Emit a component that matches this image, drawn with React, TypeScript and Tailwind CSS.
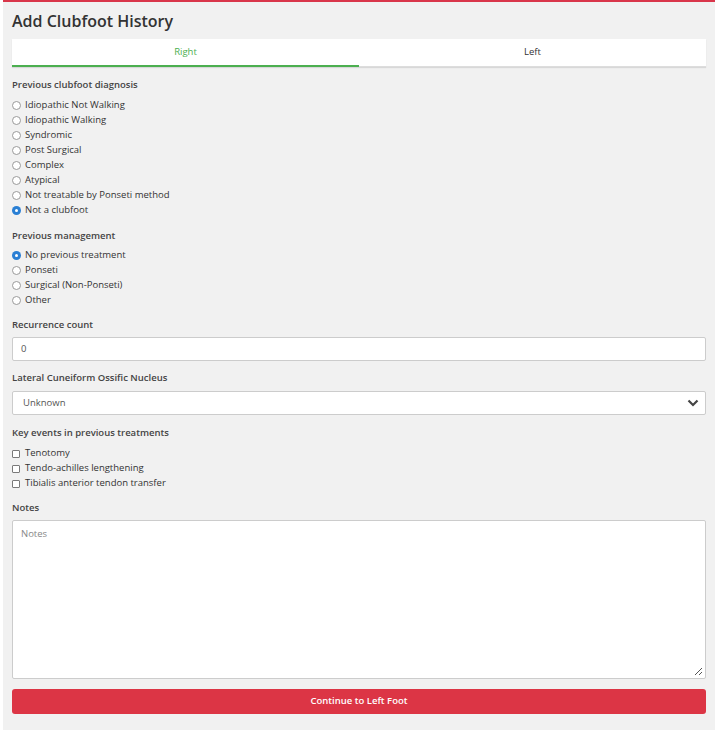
import React from "react";

const font = { fontFamily: '"Open Sans", "Noto Sans", sans-serif' };

function Radio({ checked }: { checked?: boolean }) {
  return checked ? (
    <span className="w-[9px] h-[9px] rounded-full bg-[#2a7fd4] flex items-center justify-center shrink-0">
      <span className="w-[3px] h-[3px] rounded-full bg-white" />
    </span>
  ) : (
    <span className="w-[9px] h-[9px] rounded-full border border-[#9a9a9a] bg-white shrink-0" />
  );
}

function Check() {
  return <span className="w-[8px] h-[8px] border border-[#7a7a7a] bg-white rounded-[1px] shrink-0" />;
}

function RadioGroup({ items, sel }: { items: string[]; sel: string }) {
  return (
    <div className="flex flex-col">
      {items.map((t) => (
        <div key={t} className="flex items-center gap-[4px] h-[15px]">
          <Radio checked={t === sel} />
          <span className="text-[9.5px] text-[#333]">{t}</span>
        </div>
      ))}
    </div>
  );
}

function Label({ children }: { children: React.ReactNode }) {
  return <div className="text-[9.5px] font-semibold text-[#444] h-[14px] leading-[14px]">{children}</div>;
}

export default function App() {
  return (
    <div className="bg-white w-[716px] h-[734px]" style={font}>
      <div className="ml-[3px] w-[712px] h-[730px] bg-[#f1f1f1] border-t-2 border-[#d9364a] px-[9px] flex flex-col">
        <div className="text-[16px] font-semibold text-[#333] mt-[8px] h-[22px] leading-[22px]">Add Clubfoot History</div>
        <div className="mt-[7px] flex bg-white h-[28px] shadow-[0_1px_1px_rgba(0,0,0,0.1)]">
          <div className="flex-1 flex items-center justify-center text-[9.5px] text-[#4caf50] border-b-2 border-[#4caf50]">Right</div>
          <div className="flex-1 flex items-center justify-center text-[9.5px] text-[#333] border-b border-[#ddd]">Left</div>
        </div>
        <div className="mt-[11px]"><Label>Previous clubfoot diagnosis</Label></div>
        <div className="mt-[6px]">
          <RadioGroup
            sel="Not a clubfoot"
            items={[
              "Idiopathic Not Walking",
              "Idiopathic Walking",
              "Syndromic",
              "Post Surgical",
              "Complex",
              "Atypical",
              "Not treatable by Ponseti method",
              "Not a clubfoot",
            ]}
          />
        </div>
        <div className="mt-[11px]"><Label>Previous management</Label></div>
        <div className="mt-[5px]">
          <RadioGroup
            sel="No previous treatment"
            items={["No previous treatment", "Ponseti", "Surgical (Non-Ponseti)", "Other"]}
          />
        </div>
        <div className="mt-[10px]"><Label>Recurrence count</Label></div>
        <div className="mt-[5px] h-[24px] bg-white border border-[#ccc] rounded-[2px] flex items-center px-[8px] text-[9.5px] text-[#555]">0</div>
        <div className="mt-[10px]"><Label>Lateral Cuneiform Ossific Nucleus</Label></div>
        <div className="mt-[6px] h-[24px] bg-white border border-[#ccc] rounded-[2px] flex items-center justify-between pl-[10px] pr-[6px] text-[9.5px] text-[#555]">
          <span>Unknown</span>
          <svg width="12" height="8" viewBox="0 0 12 8">
            <path d="M1.5 1.5 L6 6 L10.5 1.5" stroke="#444" strokeWidth="2.2" fill="none" />
          </svg>
        </div>
        <div className="mt-[11px]"><Label>Key events in previous treatments</Label></div>
        <div className="mt-[6px] flex flex-col">
          {["Tenotomy", "Tendo-achilles lengthening", "Tibialis anterior tendon transfer"].map((t) => (
            <div key={t} className="flex items-center gap-[5px] h-[15px]">
              <Check />
              <span className="text-[9.5px] text-[#333]">{t}</span>
            </div>
          ))}
        </div>
        <div className="mt-[10px]"><Label>Notes</Label></div>
        <div className="mt-[5px] h-[159px] bg-white border border-[#ccc] rounded-[2px] relative px-[8px] pt-[6px] text-[9.5px] text-[#888]">
          Notes
          <svg className="absolute right-[2px] bottom-[2px]" width="9" height="9" viewBox="0 0 9 9">
            <path d="M8 1 L1 8 M8 5 L5 8" stroke="#555" strokeWidth="1" />
          </svg>
        </div>
        <div className="mt-[10px] h-[25px] bg-[#dc3545] rounded-[3px] flex items-center justify-center text-white text-[9.5px] font-semibold">
          Continue to Left Foot
        </div>
      </div>
    </div>
  );
}
